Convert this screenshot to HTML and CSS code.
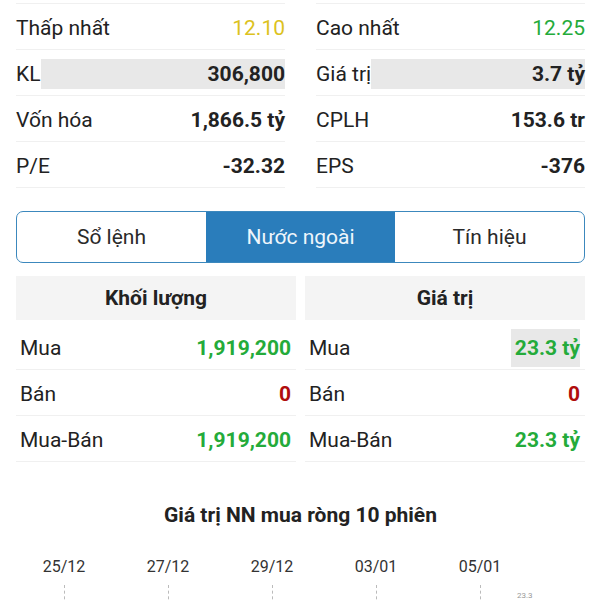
FILE: index.html
```html
<!DOCTYPE html>
<html>
  <head>
    <title>Nước ngoài</title>
    <link rel="stylesheet" href="styles.css">
  </head>
  <body>
    <div class="stats">
      <div class="stats-col">
        <div class="row"><span class="label">Thấp nhất</span><span class="value yellow">12.10</span></div>
        <div class="row"><span class="label">KL</span><span class="value bold shaded">306,800</span></div>
        <div class="row"><span class="label">Vốn hóa</span><span class="value bold">1,866.5 tỷ</span></div>
        <div class="row"><span class="label">P/E</span><span class="value bold">-32.32</span></div>
      </div>
      <div class="stats-col">
        <div class="row"><span class="label">Cao nhất</span><span class="value green">12.25</span></div>
        <div class="row"><span class="label">Giá trị</span><span class="value bold shaded">3.7 tỷ</span></div>
        <div class="row"><span class="label">CPLH</span><span class="value bold">153.6 tr</span></div>
        <div class="row"><span class="label">EPS</span><span class="value bold">-376</span></div>
      </div>
    </div>

    <div class="tabs">
      <div class="tab">Sổ lệnh</div>
      <div class="tab active">Nước ngoài</div>
      <div class="tab">Tín hiệu</div>
    </div>

    <div class="foreign">
      <div class="foreign-col">
        <div class="foreign-head">Khối lượng</div>
        <div class="frow"><span>Mua</span><span class="fval green">1,919,200</span></div>
        <div class="frow"><span>Bán</span><span class="fval red">0</span></div>
        <div class="frow"><span>Mua-Bán</span><span class="fval green">1,919,200</span></div>
      </div>
      <div class="foreign-col">
        <div class="foreign-head">Giá trị</div>
        <div class="frow"><span>Mua</span><span class="fval green shaded">23.3 tỷ</span></div>
        <div class="frow"><span>Bán</span><span class="fval red">0</span></div>
        <div class="frow"><span>Mua-Bán</span><span class="fval green">23.3 tỷ</span></div>
      </div>
    </div>

    <h2 class="chart-title">Giá trị NN mua ròng 10 phiên</h2>
    <div class="chart">
      <div class="tick">25/12<i></i></div>
      <div class="tick">27/12<i></i></div>
      <div class="tick">29/12<i></i></div>
      <div class="tick">03/01<i></i></div>
      <div class="tick">05/01<i></i></div>
      <span class="bar-label">23.3</span>
    </div>
  </body>
</html>
```

FILE: styles.css
```css
body {
  margin: 0;
  padding: 0 15px 0 16px;
  font-family: Roboto, "Noto Sans", sans-serif;
  color: #222;
  background-color: #fff;
  overflow: hidden;
  height: 600px;
}

.stats {
  display: flex;
  gap: 31px;
  margin-top: 3px;
}

.stats-col {
  flex: 1;
  border-top: 1px solid #f0f0f0;
}

.row {
  display: flex;
  align-items: center;
  height: 42px;
  padding-top: 3px;
  border-bottom: 1px solid #f0f0f0;
  font-size: 21px;
}

.label {
  white-space: nowrap;
}

.value {
  flex: 1;
  text-align: right;
  line-height: 30px;
}

.bold {
  font-weight: bold;
}

.shaded {
  background-color: #e8e8e8;
}

.yellow {
  color: #dcc21e;
}

.green {
  color: #24ab3a;
}

.red {
  color: #b00d0d;
}

.tabs {
  display: flex;
  margin-top: 23px;
  height: 50px;
  border: 1px solid #3c88bd;
  border-radius: 7px;
  overflow: hidden;
}

.tab {
  flex: 1;
  display: flex;
  align-items: center;
  justify-content: center;
  font-size: 21px;
  color: #2a2a2a;
}

.tab.active {
  background-color: #2a7dbb;
  color: #eef6fb;
}

.foreign {
  display: flex;
  gap: 9px;
  margin-top: 13px;
}

.foreign-col {
  flex: 1;
}

.foreign-head {
  height: 44px;
  line-height: 44px;
  margin-bottom: 4px;
  background-color: #f4f4f4;
  text-align: center;
  font-size: 21px;
  font-weight: bold;
}

.frow {
  display: flex;
  justify-content: space-between;
  align-items: center;
  height: 42px;
  padding: 3px 5px 0 4px;
  border-bottom: 1px solid #f0f0f0;
  font-size: 21px;
}

.fval {
  font-weight: bold;
  line-height: 38px;
}

.fval.shaded {
  padding-left: 4px;
}

.chart-title {
  margin: 41px 0 0;
  text-align: center;
  font-size: 21px;
  font-weight: bold;
  color: #222;
}

.chart {
  position: relative;
  display: flex;
  margin: 30px 0 0 -4px;
}

.tick {
  width: 104px;
  display: flex;
  flex-direction: column;
  align-items: center;
  font-size: 16px;
  color: #333;
}

.tick i {
  margin-top: 9px;
  height: 20px;
  border-left: 1px dashed #bbb;
}

.bar-label {
  position: absolute;
  left: 505px;
  top: 34px;
  font-size: 8px;
  color: #999;
}
```
